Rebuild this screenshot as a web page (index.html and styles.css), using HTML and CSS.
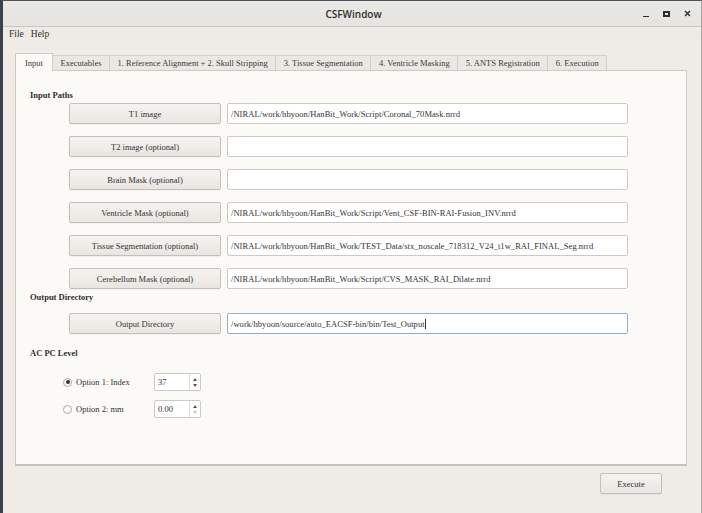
FILE: index.html
```html
<!DOCTYPE html>
<html>
<head>
<meta charset="utf-8">
<link rel="stylesheet" href="styles.css">
</head>
<body>
<div class="window">
  <div class="titlebar">
    <div class="tb-side"></div>
    <div class="title">CSFWindow</div>
    <div class="tb-side controls">
      <span class="ctl ctl-min"></span>
      <span class="ctl ctl-max"></span>
      <span class="ctl ctl-close">
        <svg width="7" height="7" viewBox="0 0 7 7"><path d="M1 1L6 6M6 1L1 6" stroke="#2e2e2e" stroke-width="1.4"/></svg>
      </span>
    </div>
  </div>
  <div class="menubar">
    <span class="menu">File</span>
    <span class="menu">Help</span>
  </div>
  <div class="content">
    <div class="tabs">
      <div class="tab active">Input</div>
      <div class="tab">Executables</div>
      <div class="tab">1. Reference Alignment + 2. Skull Stripping</div>
      <div class="tab">3. Tissue Segmentation</div>
      <div class="tab">4. Ventricle Masking</div>
      <div class="tab">5. ANTS Registration</div>
      <div class="tab">6. Execution</div>
    </div>
    <div class="panel">
      <div class="section-label first">Input Paths</div>
      <div class="rows">
        <div class="row"><button class="btn path-btn">T1 image</button><div class="field">/NIRAL/work/hbyoon/HanBit_Work/Script/Coronal_70Mask.nrrd</div></div>
        <div class="row"><button class="btn path-btn">T2 image (optional)</button><div class="field"></div></div>
        <div class="row"><button class="btn path-btn">Brain Mask (optional)</button><div class="field"></div></div>
        <div class="row"><button class="btn path-btn">Ventricle Mask (optional)</button><div class="field">/NIRAL/work/hbyoon/HanBit_Work/Script/Vent_CSF-BIN-RAI-Fusion_INV.nrrd</div></div>
        <div class="row"><button class="btn path-btn">Tissue Segmentation (optional)</button><div class="field">/NIRAL/work/hbyoon/HanBit_Work/TEST_Data/stx_noscale_718312_V24_t1w_RAI_FINAL_Seg.nrrd</div></div>
        <div class="row"><button class="btn path-btn">Cerebellum Mask (optional)</button><div class="field">/NIRAL/work/hbyoon/HanBit_Work/Script/CVS_MASK_RAI_Dilate.nrrd</div></div>
      </div>
      <div class="section-label out">Output Directory</div>
      <div class="row out-row"><button class="btn path-btn">Output Directory</button><div class="field focus">/work/hbyoon/source/auto_EACSF-bin/bin/Test_Output<span class="caret"></span></div></div>
      <div class="section-label ac">AC PC Level</div>
      <div class="options">
        <div class="opt">
          <span class="radio checked"></span><span class="opt-label">Option 1: Index</span>
          <div class="spin"><span class="spin-val">37</span><span class="spin-btns"><span class="up"></span><span class="down"></span></span></div>
        </div>
        <div class="opt">
          <span class="radio"></span><span class="opt-label">Option 2: mm</span>
          <div class="spin"><span class="spin-val">0.00</span><span class="spin-btns"><span class="up"></span><span class="down off"></span></span></div>
        </div>
      </div>
    </div>
    <div class="footer">
      <button class="btn exec">Execute</button>
    </div>
  </div>
</div>
</body>
</html>
```
FILE: styles.css
```css
html, body {
  margin: 0;
  padding: 0;
  width: 702px;
  height: 513px;
  overflow: hidden;
  background: #efece8;
}
.window {
  box-sizing: border-box;
  width: 702px;
  height: 513px;
  border-left: 3px solid #3a434d;
  border-top: 1px solid #4d535a;
  border-right: 1px solid #a9a7a4;
  background: #efece8;
  display: flex;
  flex-direction: column;
  font-family: "Liberation Serif", "DejaVu Serif", serif;
  color: #333;
}
.titlebar {
  height: 25px;
  display: grid;
  grid-template-columns: 1fr auto 1fr;
  align-items: center;
  background: linear-gradient(#ebe9e6, #e6e4e1);
  border-bottom: 1px solid #c9c5c0;
}
.title {
  font-family: "Open Sans", "DejaVu Sans", sans-serif;
  font-weight: 600;
  font-size: 10px;
  color: #2e2e2e;
  padding-left: 3px;
}
.controls {
  display: flex;
  justify-content: flex-end;
  align-items: center;
  padding-right: 3px;
}
.ctl {
  width: 21px;
  height: 14px;
  display: flex;
  align-items: center;
  justify-content: center;
}
.ctl-min::after {
  content: "";
  width: 6px;
  height: 1.5px;
  background: #2e2e2e;
  margin-top: 6px;
}
.ctl-max::after {
  content: "";
  width: 3px;
  height: 2px;
  border: 2px solid #2e2e2e;
}
.menubar {
  height: 14px;
  display: flex;
  align-items: center;
  gap: 7px;
  padding-left: 6px;
  font-size: 9.5px;
  color: #2f2f2f;
  background: #eeebe7;
}
.content {
  flex: 1;
  padding: 12px 14px 0 12px;
  display: flex;
  flex-direction: column;
}
.tabs {
  display: flex;
  align-items: flex-end;
  height: 17px;
  font-size: 8.5px;
  position: relative;
  z-index: 1;
}
.tab {
  box-sizing: border-box;
  height: 15px;
  padding: 0 7.5px;
  display: flex;
  align-items: center;
  background: #ebe8e4;
  border: 1px solid #d2cec9;
  border-bottom: none;
  margin-left: -1px;
  color: #3a3a3a;
  white-space: nowrap;
}
.tab.active {
  margin-left: 0;
  background: #fcfaf7;
  border-color: #ccc8c3;
  padding: 0 9px;
  margin-bottom: -1px;
  height: 18px;
}
.panel {
  box-sizing: border-box;
  height: 396px;
  background: #fcfaf7;
  border: 1px solid #cdc9c4;
  border-bottom: 2px solid #c6c2bd;
  padding: 18px 0 0 14px;
  font-size: 8.5px;
}
.section-label {
  font-weight: 700;
  line-height: 12px;
  color: #2f2f2f;
}
.rows {
  margin-top: 2px;
  display: flex;
  flex-direction: column;
  gap: 12px;
}
.row {
  display: flex;
  gap: 6px;
  padding-left: 39px;
  height: 21px;
}
.btn {
  box-sizing: border-box;
  font-family: "Liberation Serif", "DejaVu Serif", serif;
  font-size: 8.5px;
  color: #333;
  background: linear-gradient(#f5f3f0, #e9e6e2);
  border: 1px solid #c4bfb9;
  border-radius: 2px;
  padding: 0;
  box-shadow: 0 1px 0 rgba(0,0,0,0.04);
}
.path-btn {
  width: 152px;
  height: 21px;
}
.field {
  box-sizing: border-box;
  width: 401px;
  height: 21px;
  background: #fff;
  border: 1px solid #cdc9c4;
  border-radius: 2px;
  padding: 0 3px;
  display: flex;
  align-items: center;
  white-space: nowrap;
  overflow: hidden;
  color: #333;
  letter-spacing: 0.05px;
}
.field.focus {
  border-color: #8eaecb;
}
.caret {
  display: inline-block;
  width: 1px;
  height: 10px;
  background: #333;
}
.section-label.out {
  margin-top: 2px;
}
.out-row {
  margin-top: 10px;
}
.section-label.ac {
  margin-top: 13px;
}
.options {
  margin-top: 14px;
  display: flex;
  flex-direction: column;
  gap: 9px;
  padding-left: 33px;
}
.opt {
  display: flex;
  align-items: center;
  height: 18px;
}
.radio {
  box-sizing: border-box;
  width: 9px;
  height: 9px;
  border-radius: 50%;
  border: 1px solid #a9a49e;
  background: #fff;
  display: flex;
  align-items: center;
  justify-content: center;
}
.radio.checked::after {
  content: "";
  width: 4px;
  height: 4px;
  border-radius: 50%;
  background: #333;
}
.opt-label {
  width: 78px;
  margin-left: 4px;
  color: #333;
}
.spin {
  box-sizing: border-box;
  width: 47px;
  height: 18px;
  background: #fff;
  border: 1px solid #cdc9c4;
  border-radius: 2px;
  display: flex;
}
.spin-val {
  flex: 1;
  display: flex;
  align-items: center;
  padding-left: 3px;
}
.spin-btns {
  width: 10px;
  border-left: 1px solid #dedad5;
  display: flex;
  flex-direction: column;
  align-items: center;
  justify-content: center;
  gap: 3px;
}
.up {
  width: 0;
  height: 0;
  border-left: 2.5px solid transparent;
  border-right: 2.5px solid transparent;
  border-bottom: 3px solid #555;
}
.down {
  width: 0;
  height: 0;
  border-left: 2.5px solid transparent;
  border-right: 2.5px solid transparent;
  border-top: 3px solid #555;
}
.down.off {
  border-top-color: #c4c0bb;
}
.footer {
  display: flex;
  justify-content: flex-end;
  padding-top: 7px;
  padding-right: 25px;
}
.exec {
  width: 62px;
  height: 21px;
}
```
